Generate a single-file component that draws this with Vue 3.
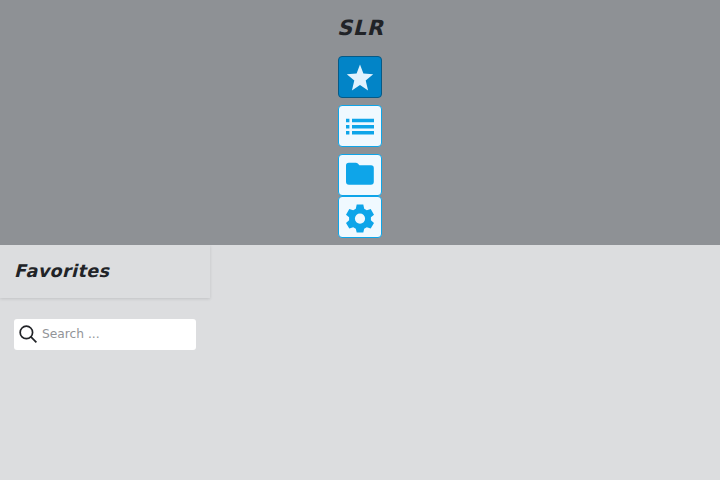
<script setup>
const items = [
  { name: 'Favorites', active: true, box: '0 0 28 28', d: 'M14 1.6 17.4 10.4 27.2 11.2 19.7 17.4 22.1 27.5 14 22.1 5.9 27.5 8.3 17.4 .8 11.2 10.6 10.4Z' },
  { name: 'List', box: '0 0 28 28', d: 'M0 6.7H3.4V10.2H0ZM6 6.7H28V10.2H6ZM0 12.9H3.4V16.4H0ZM6 12.9H28V16.4H6ZM0 19.1H3.4V22.6H0ZM6 19.1H28V22.6H6Z' },
  { name: 'Folder', box: '0 0 28 28', d: 'M2.8 1.7H9.8Q11 1.7 11.8 2.6L13.4 4.2H25A2.8 2.8 0 0 1 27.8 7V20.8A3 3 0 0 1 24.8 23.8H3A3 3 0 0 1 0 20.8V4.5A2.8 2.8 0 0 1 2.8 1.7Z' },
  { name: 'Settings', box: '0 0 28 28', d: 'M10.7 1.6H17.3L18.2 5.7 20.8 7.2 24.7 5.9 28 11.7 24.9 14.2V17.2L28 19.9 24.7 25.6 20.8 24.3 18.2 25.8 17.3 29.4H10.7L9.8 25.8 7.2 24.3 3.3 25.6 0 19.9 3.1 17.2V14.2L0 11.7 3.3 5.9 7.2 7.2 9.8 5.7ZM14 10.5A5.1 5.1 0 1 0 14 20.7 5.1 5.1 0 0 0 14 10.5Z' },
]
</script>

<template>
  <div class="page">
    <header class="nav">
      <h1>SLR</h1>
      <button v-for="item in items" :key="item.name" class="nav-btn" :class="{ active: item.active }">
        <svg :viewBox="item.box"><path :d="item.d" /></svg>
      </button>
    </header>
    <aside class="side">
      <div class="title"><h2>Favorites</h2></div>
      <div class="search">
        <svg viewBox="0 0 20 20"><circle cx="8.2" cy="8.2" r="6.9" /><path d="m13 13 6.3 6.3" /></svg>
        <input type="text" placeholder="Search ..." />
      </div>
    </aside>
  </div>
</template>

<style>
body {
  margin: 0;
  background: #dcdddf;
}
</style>

<style scoped>
.page {
  min-height: 480px;
  background: #dcdddf;
  color: #212327;
  font-family: "DejaVu Sans", sans-serif;
}
.nav {
  box-sizing: border-box;
  height: 245px;
  padding-top: 14px;
  display: flex;
  flex-direction: column;
  align-items: center;
  background: #8e9195;
}
h1,
h2 {
  margin: 0;
  font-weight: 700;
  letter-spacing: 0.025em;
  transform: skewX(-14deg);
  transform-origin: 0 76%;
}
h1 {
  height: 28px;
  margin-bottom: 14px;
  font-size: 21px;
  line-height: 28px;
}
.nav-btn {
  box-sizing: border-box;
  flex: none;
  width: 44px;
  height: 42px;
  margin: 0 0 7px;
  padding: 0;
  display: flex;
  align-items: center;
  justify-content: center;
  border: 1px solid #0ea5e9;
  border-radius: 4px;
  background: #f0f9ff;
  color: #0ea5e9;
}
.nav-btn:nth-of-type(3) {
  margin-bottom: 0;
}
.nav-btn.active {
  border-color: #075985;
  background: #0284c7;
  color: #e0f2fe;
}
.nav-btn svg {
  width: 28px;
  height: 28px;
  overflow: visible;
  fill: currentColor;
  fill-rule: evenodd;
}
.side {
  width: 210px;
}
.title {
  box-sizing: border-box;
  height: 53px;
  padding: 14px;
  box-shadow: 0 1px 3px rgba(0, 0, 0, 0.12);
  clip-path: inset(0 -6px -6px 0);
}
h2 {
  font-size: 17.5px;
  line-height: 24px;
}
.search {
  box-sizing: border-box;
  height: 31px;
  margin: 21px 14px 0;
  padding: 0 6px 1px 5.4px;
  display: flex;
  align-items: center;
  gap: 4.6px;
  border-radius: 3px;
  background: #fff;
}
.search svg {
  flex: none;
  width: 18px;
  height: 18px;
  overflow: visible;
  fill: none;
  stroke: #212327;
  stroke-width: 1.9;
}
input {
  min-width: 0;
  width: 100%;
  padding: 0 0 1px;
  border: 0;
  outline: 0;
  background: transparent;
  font: 12.25px "DejaVu Sans", sans-serif;
}
input::placeholder {
  color: #929498;
}
</style>
